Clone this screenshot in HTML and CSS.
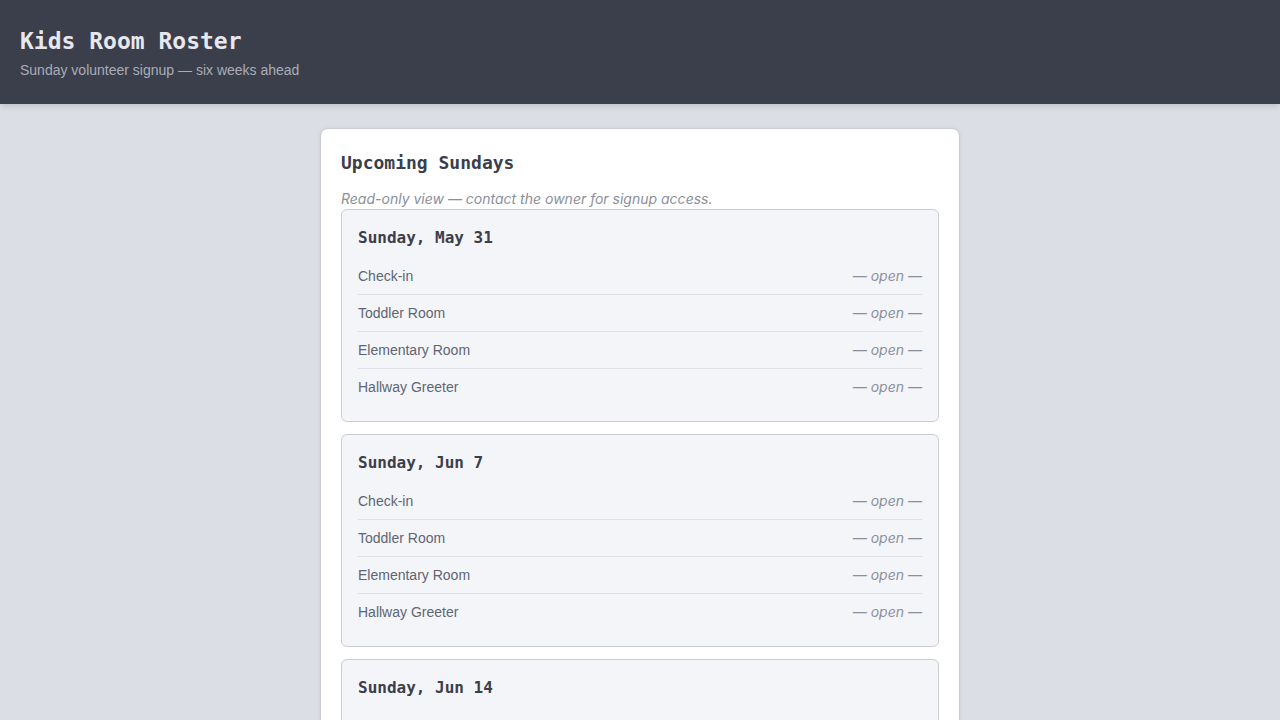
FILE: index.html
```html
<!DOCTYPE html>
<html lang="en">
<head>
    <meta charset="UTF-8">
    <meta name="viewport" content="width=device-width, initial-scale=1.0">
    <title>Kids Room Roster</title>
    <link rel="stylesheet" href="styles.css">
</head>
<body>
    <header class="top">
        <h1>Kids Room Roster</h1>
        <p class="tagline">Sunday volunteer signup — six weeks ahead</p>
    </header>

    <main class="container">
        <h2>Upcoming Sundays</h2>
        <p class="note">Read-only view — contact the owner for signup access.</p>

        <!-- One block per Sunday -->
        <section class="day">
            <h3>Sunday, May 31</h3>
            <div class="slot"><span class="role">Check-in</span><span class="who">— open —</span></div>
            <div class="slot"><span class="role">Toddler Room</span><span class="who">— open —</span></div>
            <div class="slot"><span class="role">Elementary Room</span><span class="who">— open —</span></div>
            <div class="slot"><span class="role">Hallway Greeter</span><span class="who">— open —</span></div>
        </section>

        <section class="day">
            <h3>Sunday, Jun 7</h3>
            <div class="slot"><span class="role">Check-in</span><span class="who">— open —</span></div>
            <div class="slot"><span class="role">Toddler Room</span><span class="who">— open —</span></div>
            <div class="slot"><span class="role">Elementary Room</span><span class="who">— open —</span></div>
            <div class="slot"><span class="role">Hallway Greeter</span><span class="who">— open —</span></div>
        </section>

        <section class="day">
            <h3>Sunday, Jun 14</h3>
            <div class="slot"><span class="role">Check-in</span><span class="who">— open —</span></div>
            <div class="slot"><span class="role">Toddler Room</span><span class="who">— open —</span></div>
            <div class="slot"><span class="role">Elementary Room</span><span class="who">— open —</span></div>
            <div class="slot"><span class="role">Hallway Greeter</span><span class="who">— open —</span></div>
        </section>
    </main>
</body>
</html>
```

FILE: styles.css
```css
body {
    font-family: "Liberation Sans", Arial, sans-serif;
    background-color: #dcdee6;
    color: #333;
    margin: 0;
}
.top {
    background-color: #3b3f4b;
    padding: 27px 20px 25px;
    box-shadow: 0 2px 6px rgba(0, 0, 0, 0.15);
}
.top h1 {
    font-family: "DejaVu Sans Mono", monospace;
    font-size: 23px;
    line-height: 28px;
    color: #e6e8ee;
    margin: 0 0 7px;
}
.tagline {
    font-size: 14px;
    line-height: 17px;
    color: #a9adb8;
    margin: 0;
}
.container {
    background-color: #fff;
    max-width: 598px;
    margin: 24px auto 0;
    padding: 21px 20px 20px;
    border: 1px solid #c9ccd3;
    border-radius: 8px;
    box-shadow: 0 1px 4px rgba(0, 0, 0, 0.08);
}
.container h2 {
    font-family: "DejaVu Sans Mono", monospace;
    font-size: 18px;
    line-height: 26px;
    color: #3b3f4b;
    margin: 0 0 13px;
}
.note {
    font-family: Inter, sans-serif;
    font-style: italic;
    font-size: 14px;
    line-height: 18px;
    color: #8a8f9b;
    padding-top: 1px;
    margin: 0 0 1px;
}
.day {
    background-color: #f4f5f9;
    border: 1px solid #c9ccd3;
    border-radius: 6px;
    padding: 17px 16px 16px;
    margin-bottom: 12px;
}
.day h3 {
    font-family: "DejaVu Sans Mono", monospace;
    font-size: 16px;
    line-height: 22px;
    color: #3b3f4b;
    margin: 0 0 9px;
}
.slot {
    display: flex;
    justify-content: space-between;
    padding: 9px 0;
    line-height: 18px;
    font-size: 14px;
    border-bottom: 1px solid #dfe1e7;
}
.slot:last-child {
    border-bottom: none;
}
.role {
    color: #606573;
}
.who {
    font-family: Inter, sans-serif;
    color: #8a8f9b;
    font-style: italic;
}
```
